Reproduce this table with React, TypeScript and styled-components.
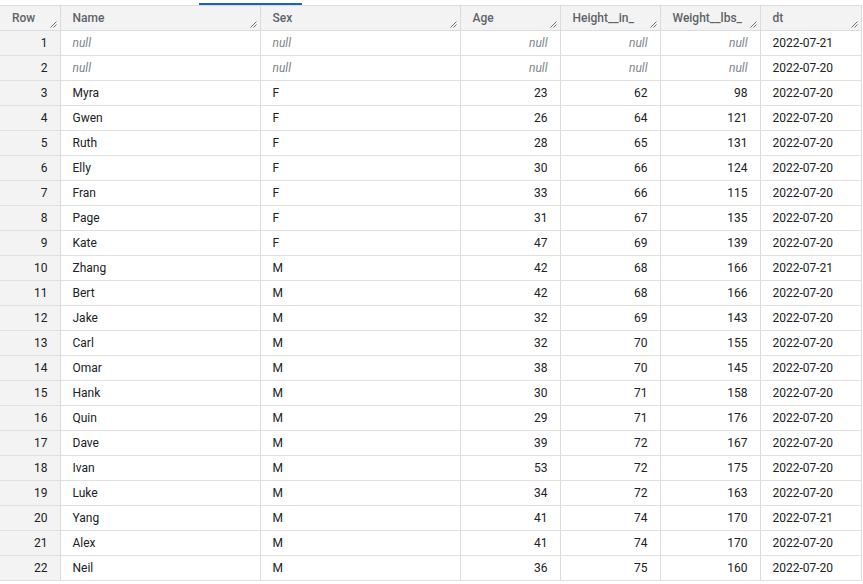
import React from "react";
import styled, { createGlobalStyle } from "styled-components";

const Global = createGlobalStyle`
  html, body { margin: 0; padding: 0; background: #fff; }
  body { font-family: Roboto, "Noto Sans", Arial, sans-serif; }
`;

const Strip = styled.div`
  height: 5px;
  display: flex;
  align-items: flex-start;
  padding-top: 3px;
  box-sizing: border-box;
`;

const Indicator = styled.div`
  margin-left: 199px;
  width: 103px;
  height: 2px;
  background: #1a5fcf;
`;

const Table = styled.table`
  border-collapse: collapse;
  table-layout: fixed;
  width: 861px;
  font-size: 12px;
  color: #202124;
`;

const Th = styled.th<{ $w: number }>`
  width: ${(p) => p.$w}px;
  height: 25px;
  padding: 0 12px;
  box-sizing: border-box;
  background: #f3f3f3;
  border: 1px solid #dadce0;
  border-left: none;
  text-align: left;
  font-weight: 500;
  color: #5f6368;
  position: relative;
  vertical-align: middle;
  &:last-child { border-right: 1px solid #dadce0; }
`;

const Grip = styled.svg`
  position: absolute;
  right: 3px;
  bottom: 2px;
  width: 7px;
  height: 7px;
`;

const Tr = styled.tr``;

const Td = styled.td<{ $right?: boolean; $row?: boolean }>`
  height: 25px;
  padding: 0 12px;
  box-sizing: border-box;
  border-bottom: 1px solid #e0e0e0;
  border-right: 1px solid #dadce0;
  text-align: ${(p) => (p.$right ? "right" : "left")};
  background: ${(p) => (p.$row ? "#f3f3f3" : "#fff")};
  white-space: nowrap;
  vertical-align: middle;
`;

const Null = styled.span`
  font-style: italic;
  color: #80868b;
`;

const cols = [
  { name: "Row", w: 60 },
  { name: "Name", w: 200 },
  { name: "Sex", w: 200 },
  { name: "Age", w: 100 },
  { name: "Height__in_", w: 100 },
  { name: "Weight__lbs_", w: 100 },
  { name: "dt", w: 101 },
];

type R = [string | null, string | null, number | null, number | null, number | null, string];

const rows: R[] = [
  [null, null, null, null, null, "2022-07-21"],
  [null, null, null, null, null, "2022-07-20"],
  ["Myra", "F", 23, 62, 98, "2022-07-20"],
  ["Gwen", "F", 26, 64, 121, "2022-07-20"],
  ["Ruth", "F", 28, 65, 131, "2022-07-20"],
  ["Elly", "F", 30, 66, 124, "2022-07-20"],
  ["Fran", "F", 33, 66, 115, "2022-07-20"],
  ["Page", "F", 31, 67, 135, "2022-07-20"],
  ["Kate", "F", 47, 69, 139, "2022-07-20"],
  ["Zhang", "M", 42, 68, 166, "2022-07-21"],
  ["Bert", "M", 42, 68, 166, "2022-07-20"],
  ["Jake", "M", 32, 69, 143, "2022-07-20"],
  ["Carl", "M", 32, 70, 155, "2022-07-20"],
  ["Omar", "M", 38, 70, 145, "2022-07-20"],
  ["Hank", "M", 30, 71, 158, "2022-07-20"],
  ["Quin", "M", 29, 71, 176, "2022-07-20"],
  ["Dave", "M", 39, 72, 167, "2022-07-20"],
  ["Ivan", "M", 53, 72, 175, "2022-07-20"],
  ["Luke", "M", 34, 72, 163, "2022-07-20"],
  ["Yang", "M", 41, 74, 170, "2022-07-21"],
  ["Alex", "M", 41, 74, 170, "2022-07-20"],
  ["Neil", "M", 36, 75, 160, "2022-07-20"],
];

const v = (x: string | number | null) => (x === null ? <Null>null</Null> : x);

export default function App() {
  return (
    <>
      <Global />
      <Strip>
        <Indicator />
      </Strip>
      <Table>
        <thead>
          <tr>
            {cols.map((c) => (
              <Th key={c.name} $w={c.w}>
                {c.name}
                <Grip viewBox="0 0 7 7">
                  <path d="M0.5 6.5 L6.5 0.5 M3.5 6.5 L6.5 3.5" stroke="#5f6368" strokeWidth="0.9" />
                </Grip>
              </Th>
            ))}
          </tr>
        </thead>
        <tbody>
          {rows.map((r, i) => (
            <Tr key={i}>
              <Td $row $right>{i + 1}</Td>
              <Td>{v(r[0])}</Td>
              <Td>{v(r[1])}</Td>
              <Td $right>{v(r[2])}</Td>
              <Td $right>{v(r[3])}</Td>
              <Td $right>{v(r[4])}</Td>
              <Td>{r[5]}</Td>
            </Tr>
          ))}
        </tbody>
      </Table>
    </>
  );
}
